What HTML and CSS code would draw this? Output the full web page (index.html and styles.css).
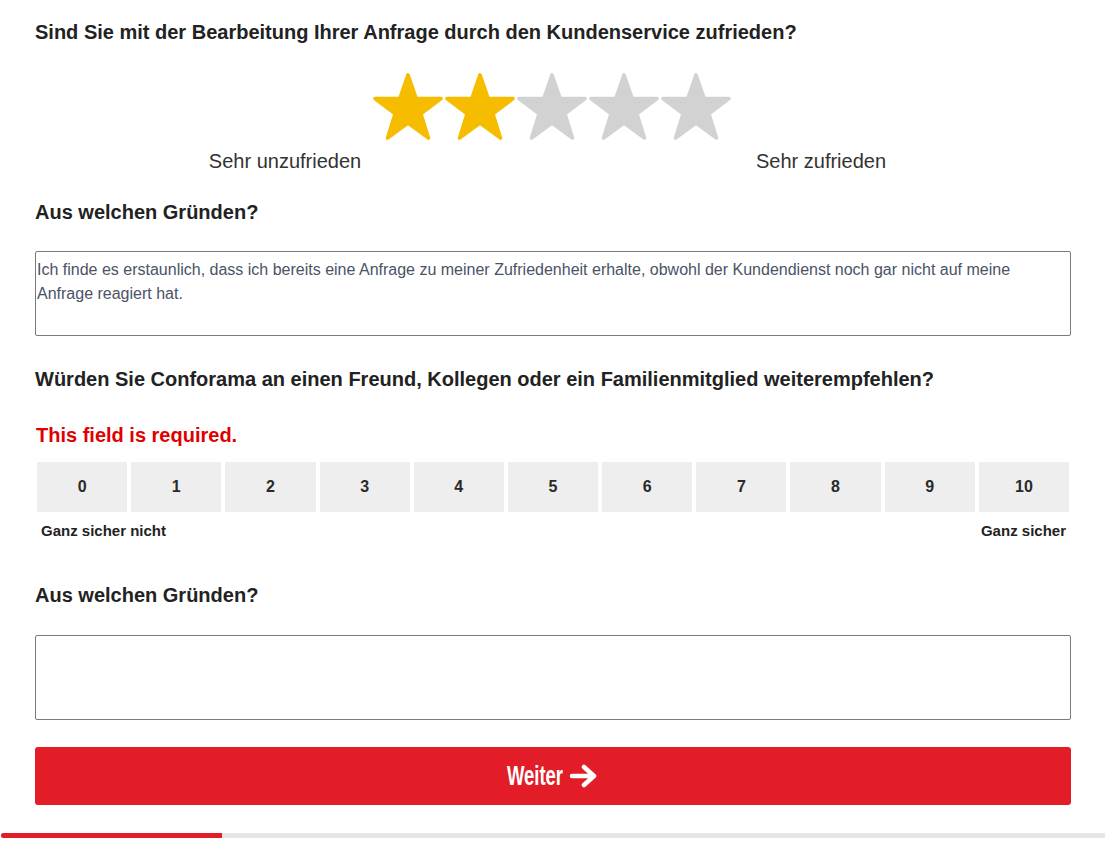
FILE: index.html
```html
<!DOCTYPE html>
<html lang="de">
<head>
<meta charset="utf-8">
<title>Umfrage</title>
<link rel="stylesheet" href="styles.css">
</head>
<body>
<div class="page">
  <h2 class="q q-first">Sind Sie mit der Bearbeitung Ihrer Anfrage durch den Kundenservice zufrieden?</h2>
  <div class="stars">
    <svg class="star on" viewBox="0 0 100 96"><polygon points="50,4 61.5,37 96,37 68,58 78.5,92 50,71 21.5,92 32,58 4,37 38.5,37"/></svg>
    <svg class="star on" viewBox="0 0 100 96"><polygon points="50,4 61.5,37 96,37 68,58 78.5,92 50,71 21.5,92 32,58 4,37 38.5,37"/></svg>
    <svg class="star" viewBox="0 0 100 96"><polygon points="50,4 61.5,37 96,37 68,58 78.5,92 50,71 21.5,92 32,58 4,37 38.5,37"/></svg>
    <svg class="star" viewBox="0 0 100 96"><polygon points="50,4 61.5,37 96,37 68,58 78.5,92 50,71 21.5,92 32,58 4,37 38.5,37"/></svg>
    <svg class="star" viewBox="0 0 100 96"><polygon points="50,4 61.5,37 96,37 68,58 78.5,92 50,71 21.5,92 32,58 4,37 38.5,37"/></svg>
  </div>
  <div class="scale-labels">
    <span>Sehr unzufrieden</span>
    <span>Sehr zufrieden</span>
  </div>
  <h2 class="q q-reason">Aus welchen Gründen?</h2>
  <textarea class="field field-1">Ich finde es erstaunlich, dass ich bereits eine Anfrage zu meiner Zufriedenheit erhalte, obwohl der Kundendienst noch gar nicht auf meine Anfrage reagiert hat.</textarea>
  <h2 class="q q-nps">Würden Sie Conforama an einen Freund, Kollegen oder ein Familienmitglied weiterempfehlen?</h2>
  <div class="error">This field is required.</div>
  <div class="nps">
    <button class="nps-btn">0</button>
    <button class="nps-btn">1</button>
    <button class="nps-btn">2</button>
    <button class="nps-btn">3</button>
    <button class="nps-btn">4</button>
    <button class="nps-btn">5</button>
    <button class="nps-btn">6</button>
    <button class="nps-btn">7</button>
    <button class="nps-btn">8</button>
    <button class="nps-btn">9</button>
    <button class="nps-btn">10</button>
  </div>
  <div class="nps-labels">
    <span>Ganz sicher nicht</span>
    <span>Ganz sicher</span>
  </div>
  <h2 class="q q-reason2">Aus welchen Gründen?</h2>
  <textarea class="field field-2"></textarea>
  <button class="next"><span class="next-label">Weiter</span><svg class="arrow" viewBox="0 0 30 24"><path d="M3 12 H25 M15 3 L25 12 L15 21" fill="none" stroke="#fff" stroke-width="4.5" stroke-linecap="round" stroke-linejoin="round"/></svg></button>
</div>
<div class="progress"><div class="progress-fill"></div></div>
</body>
</html>
```
FILE: styles.css
```css
html, body {
  margin: 0;
  padding: 0;
  background: #fff;
}
body {
  font-family: "Liberation Sans", Arial, sans-serif;
  color: #222;
}
.page {
  padding: 20px 34px 0 35px;
}
.q {
  font-size: 20px;
  font-weight: bold;
  line-height: 24px;
  margin: 0;
  color: #222;
}
.stars {
  display: flex;
  justify-content: center;
  margin-top: 28px;
  padding-right: 3px;
}
.star {
  width: 72px;
  height: 69px;
  display: block;
}
.star polygon {
  fill: #d2d2d2;
  stroke: #d2d2d2;
  stroke-width: 5;
  stroke-linejoin: round;
}
.star.on polygon {
  fill: #f6bd00;
  stroke: #f6bd00;
}
.scale-labels {
  display: grid;
  grid-template-columns: 1fr 1fr;
  margin: 8px -18px 0 -18px;
  font-size: 20px;
  line-height: 24px;
  color: #333;
  text-align: center;
}
.q-reason {
  margin-top: 27px;
}
.field {
  display: block;
  box-sizing: border-box;
  width: 100%;
  height: 85px;
  margin: 27px 0 0 0;
  padding: 6px 1px 4px;
  border: 1px solid #7a7a7a;
  border-radius: 2px;
  font-family: "Liberation Sans", Arial, sans-serif;
  font-size: 16px;
  line-height: 24px;
  color: #4a5366;
  resize: none;
  background: #fff;
}
.field-2 {
  margin-top: 28px;
}
.q-nps {
  margin-top: 31px;
}
.error {
  margin-top: 32px;
  font-size: 20px;
  line-height: 24px;
  font-weight: bold;
  color: #e00000;
  padding-left: 1px;
}
.nps {
  display: grid;
  grid-template-columns: repeat(11, 1fr);
  gap: 4px;
  margin-top: 15px;
  padding: 0 2px;
}
.nps-btn {
  height: 50px;
  border: none;
  background: #eeeeee;
  font-family: "Liberation Sans", Arial, sans-serif;
  font-size: 16px;
  font-weight: bold;
  color: #2a2a2a;
  padding: 0;
}
.nps-labels {
  display: flex;
  justify-content: space-between;
  margin-top: 10px;
  padding: 0 5px 0 6px;
  font-size: 15px;
  line-height: 18px;
  font-weight: bold;
  color: #222;
}
.q-reason2 {
  margin-top: 43px;
}
.next {
  display: flex;
  align-items: center;
  justify-content: center;
  gap: 5px;
  width: 100%;
  height: 58px;
  margin-top: 27px;
  border: none;
  border-radius: 3px;
  background: #e21d27;
  color: #fff;
  padding: 0;
}
.next-label {
  display: inline-block;
  font-family: "Liberation Sans", Arial, sans-serif;
  font-size: 28px;
  font-weight: bold;
  width: 86px;
  margin: 0 -14px 0 -15px;
  transform: scaleX(0.66);
}
.arrow {
  width: 30px;
  height: 24px;
  display: block;
}
.progress {
  margin: 28px 0 0 1px;
  height: 5px;
  background: #e6e6e6;
}
.progress-fill {
  width: 221px;
  height: 100%;
  background: #e21d27;
  border-radius: 3px 0 0 3px;
}
```
